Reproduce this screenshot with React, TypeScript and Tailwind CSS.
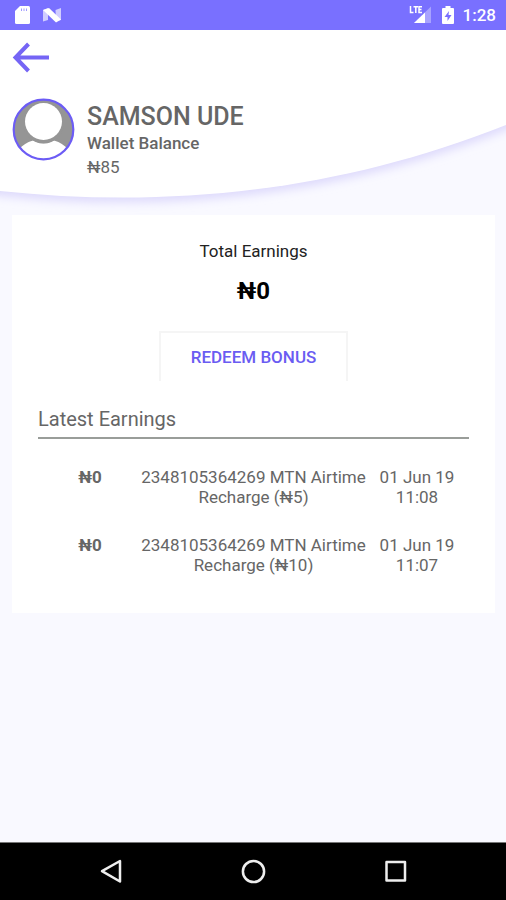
import React from 'react';

interface Earning {
  id: string;
  amount: string;
  description: string;
  date: string;
  time: string;
}

const earnings: Earning[] = [
  { id: '1', amount: '₦0', description: '2348105364269 MTN Airtime Recharge (₦5)', date: '01 Jun 19', time: '11:08' },
  { id: '2', amount: '₦0', description: '2348105364269 MTN Airtime Recharge (₦10)', date: '01 Jun 19', time: '11:07' },
];

const StatusBar: React.FC = () => (
  <div className="flex h-[30px] items-center justify-between bg-[#7970ff] pl-2 pr-2.5 text-white">
    <div className="flex items-center gap-2.5 pl-1.5">
      <svg width="18" height="20" viewBox="0 0 18 20" aria-hidden="true">
        <path d="M6 1H14.5Q16 1 16 2.500V17.500Q16 19 14.500 19H2.500Q1 19 1 17.500V6Z" fill="#fff" />
        <path d="M7.500 3.500V6M10 3.500V6M12.500 3.500V6" stroke="#7970ff" strokeWidth="1" opacity="0.7" />
      </svg>
      <svg width="20" height="16" viewBox="0 0 20 16" aria-hidden="true">
        <path d="M1 3L6 1V13L1 14.500Z M13.500 3L19 1V13L14 14.500Z" fill="#fff" opacity="0.65" />
        <path d="M1 3L7 1L19 12.500L14 15.500Z" fill="#fff" />
      </svg>
    </div>
    <div className="flex items-center gap-2">
      <svg width="24" height="20" viewBox="0 0 24 20" aria-hidden="true">
        <path d="M5 18L22 1.500V18Z" fill="#fff" opacity="0.35" />
        <path d="M5 18L16 7.500V18Z" fill="#fff" />
        <path d="M0 0H13.500V9.500H0Z" fill="#7970ff" />
        <path d="M1.500 1V7.500H4.500M4.500 1.800H9M6.800 1.800V8M13 1.800H10V7.500H13M10 4.600H12.500" fill="none" stroke="#fff" strokeWidth="1.5" />
      </svg>
      <svg width="14" height="20" viewBox="0 0 14 20" aria-hidden="true">
        <path d="M4.500 1H9.500V3H12Q13 3 13 4V18Q13 19 12 19H2Q1 19 1 18V4Q1 3 2 3H4.500Z" fill="#fff" />
        <path d="M8 6L3.500 12H6.500V16L10.500 10H7.500Z" fill="#7970ff" />
      </svg>
      <span className="text-[17px] font-medium leading-5">1:28</span>
    </div>
  </div>
);

const Header: React.FC = () => (
  <header className="relative pb-9">
    <svg
      className="absolute inset-0 h-full w-full"
      viewBox="0 0 506 185"
      preserveAspectRatio="none"
      aria-hidden="true"
    >
      <defs>
        <filter id="curveShadow" x="-10%" y="-10%" width="120%" height="130%">
          <feGaussianBlur stdDeviation="5" />
        </filter>
      </defs>
      <path d="M-20 0H526V92L506 100C340 166 170 184 0 166L-20 163Z" fill="#dedafc" filter="url(#curveShadow)" />
      <path d="M0 0H506V95C340 161 170 179 0 161Z" fill="#fff" />
    </svg>
    <div className="relative px-3">
      <button type="button" aria-label="Back" className="block py-3">
        <svg width="38" height="32" viewBox="0 0 38 32" fill="none" stroke="#7565f5" strokeWidth="4" aria-hidden="true">
          <path d="M37 15.500H4M16.500 2L3.500 15.500L16.500 29" />
        </svg>
      </button>
      <div className="flex items-start gap-3 pt-3">
        <svg width="63" height="63" viewBox="0 0 63 63" className="shrink-0" aria-hidden="true">
          <defs>
            <clipPath id="avatarClip">
              <circle cx="31.500" cy="31.500" r="30" />
            </clipPath>
          </defs>
          <g clipPath="url(#avatarClip)">
            <rect width="63" height="63" fill="#959595" />
            <path d="M5 63V53Q12 45 21 42.500Q31.500 48 42 42.500Q51 45 58 53V63Z" fill="#fff" />
            <circle cx="31.500" cy="25" r="20.500" fill="#959595" />
            <circle cx="31.500" cy="23.500" r="18.500" fill="#fff" />
          </g>
          <circle cx="31.500" cy="31.500" r="29.800" fill="none" stroke="#6c5cf5" strokeWidth="2.200" />
        </svg>
        <div className="pt-[5px] text-[#666]">
          <h1 className="text-[25px] font-medium leading-7">SAMSON UDE</h1>
          <p className="text-[17px] font-medium leading-6">Wallet Balance</p>
          <p className="text-[17px] leading-6">₦85</p>
        </div>
      </div>
    </div>
  </header>
);

const NavBar: React.FC = () => (
  <nav className="flex h-[58px] items-center justify-around border-t border-[#777] bg-black px-10">
    <button type="button" aria-label="Back">
      <svg width="24" height="26" viewBox="0 0 24 26" fill="none" stroke="#eee" strokeWidth="2.500" strokeLinejoin="round" aria-hidden="true">
        <path d="M21 2V22.500L3 12.200Z" />
      </svg>
    </button>
    <button type="button" aria-label="Home">
      <svg width="26" height="26" viewBox="0 0 26 26" fill="none" stroke="#eee" strokeWidth="2.500" aria-hidden="true">
        <circle cx="13.500" cy="12.500" r="10.600" />
      </svg>
    </button>
    <button type="button" aria-label="Recents">
      <svg width="24" height="24" viewBox="0 0 24 24" fill="none" stroke="#eee" strokeWidth="2.500" strokeLinejoin="round" aria-hidden="true">
        <rect x="3.500" y="2" width="18.500" height="18.500" />
      </svg>
    </button>
  </nav>
);

export default function App() {
  return (
    <div className="flex min-h-screen flex-col bg-[#f9f9ff] font-[Roboto,sans-serif]">
      <StatusBar />
      <Header />
      <main className="flex-1 pl-3 pr-[11px]">
        <section className="bg-white px-[26px] pt-6 pb-6">
          <div className="flex flex-col items-center">
            <h2 className="text-[17px] leading-6 text-[#222]">Total Earnings</h2>
            <p className="pt-3 text-2xl font-bold leading-8 text-black">₦0</p>
            <button
              type="button"
              className="mt-6 border-2 border-b-0 border-[#f5f5f5] px-[30px] py-3 text-[17px] font-medium leading-6 text-[#6a5cf2]"
            >
              REDEEM BONUS
            </button>
          </div>
          <h3 className="mt-6 border-b-2 border-[#999d99] pb-1 text-xl leading-7 text-[#666]">Latest Earnings</h3>
          <div className="px-1 pt-3.5">
            <table className="w-full table-fixed text-center text-[17px] leading-5 text-[#666]">
              <colgroup>
                <col className="w-24" />
                <col />
                <col className="w-24" />
              </colgroup>
              <tbody>
                {earnings.map(e => (
                  <tr key={e.id} className="align-top">
                    <td className="py-3.5 font-bold">{e.amount}</td>
                    <td className="py-3.5">{e.description}</td>
                    <td className="py-3.5">
                      {e.date}
                      <br />
                      {e.time}
                    </td>
                  </tr>
                ))}
              </tbody>
            </table>
          </div>
        </section>
      </main>
      <NavBar />
    </div>
  );
}
